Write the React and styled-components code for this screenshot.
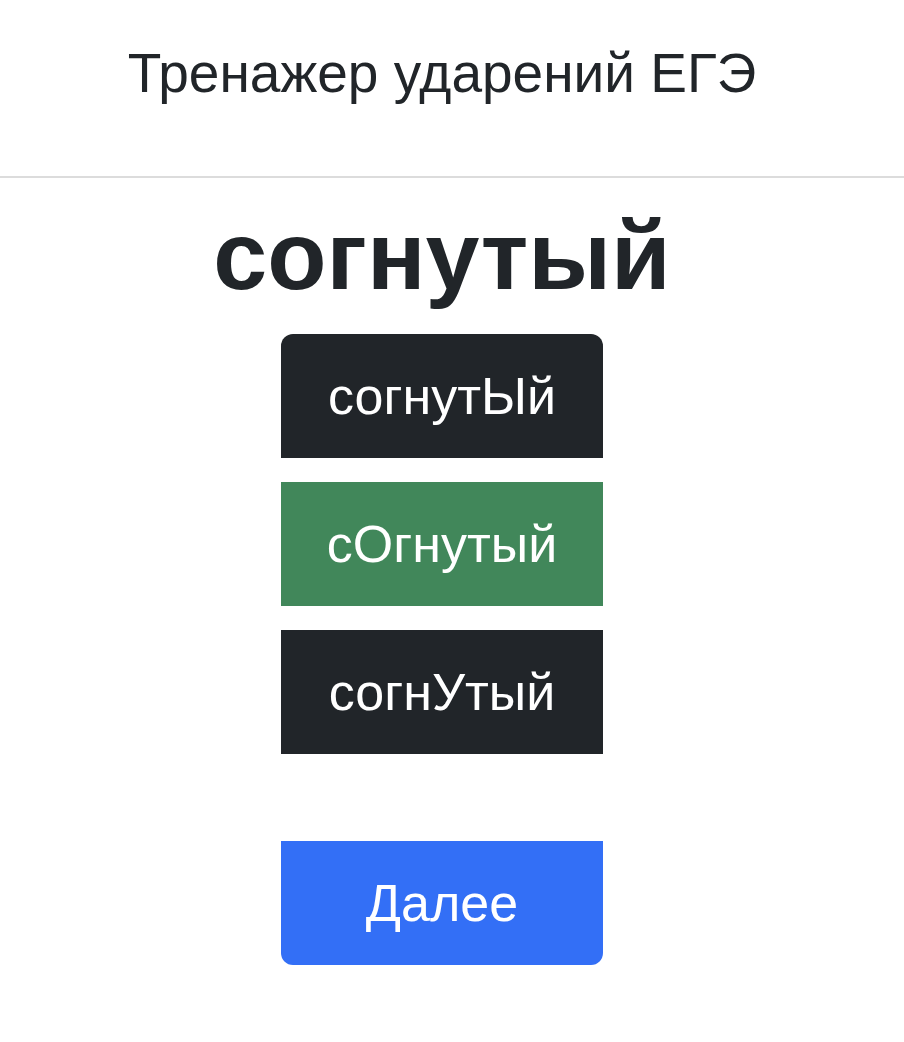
import React, { useState } from 'react'
import styled, { createGlobalStyle } from 'styled-components'

const GlobalStyle = createGlobalStyle`
  body {
    margin: 0;
    background: #ffffff;
    font-family: "Liberation Sans", Arial, sans-serif;
    color: #212529;
  }
`

const Page = styled.div`
  display: flex;
  flex-direction: column;
  padding-right: 20px;
`

const Header = styled.header`
  height: 176px;
  display: flex;
  align-items: flex-start;
  justify-content: center;
  border-bottom: 2px solid #dcdcdc;
  margin-right: -20px;
  padding-right: 20px;
`

const Title = styled.h1`
  margin: 40px 0 0;
  font-size: 55px;
  font-weight: 400;
  line-height: 1.2;
`

const Main = styled.main`
  display: flex;
  flex-direction: column;
  align-items: center;
`

const Word = styled.h2`
  margin: 20px 0 20px;
  font-size: 97px;
  font-weight: 700;
  line-height: 1.2;
`

const Options = styled.div`
  display: flex;
  flex-direction: column;
  gap: 24px;
  width: 322px;
`

// Первая кнопка скруглена сверху, "Далее" снизу, как в вертикальной группе
const Option = styled.button`
  height: 124px;
  border: none;
  border-radius: ${p => (p.$first ? '12px 12px 0 0' : p.$last ? '0 0 12px 12px' : '0')};
  background: ${p => (p.$variant === 'correct' ? '#41875a' : p.$variant === 'next' ? '#336ff6' : '#212529')};
  color: #ffffff;
  font-family: "Liberation Sans", Arial, sans-serif;
  font-size: 52px;
  cursor: pointer;
`

const NextWrap = styled.div`
  margin-top: 87px;
  width: 322px;
  display: flex;
  flex-direction: column;
`

const options = ['согнутЫй', 'сОгнутый', 'согнУтый']

const App = () => {
  const [picked, setPicked] = useState(1)

  return (
    <Page>
      <GlobalStyle />
      <Header>
        <Title>Тренажер ударений ЕГЭ</Title>
      </Header>
      <Main>
        <Word>согнутый</Word>
        <Options>
          {options.map((o, i) => (
            <Option
              key={o}
              $first={i === 0}
              $variant={i === picked ? 'correct' : 'dark'}
              onClick={() => setPicked(i)}
            >
              {o}
            </Option>
          ))}
        </Options>
        <NextWrap>
          <Option $last $variant="next">
            Далее
          </Option>
        </NextWrap>
      </Main>
    </Page>
  )
}

export default App
